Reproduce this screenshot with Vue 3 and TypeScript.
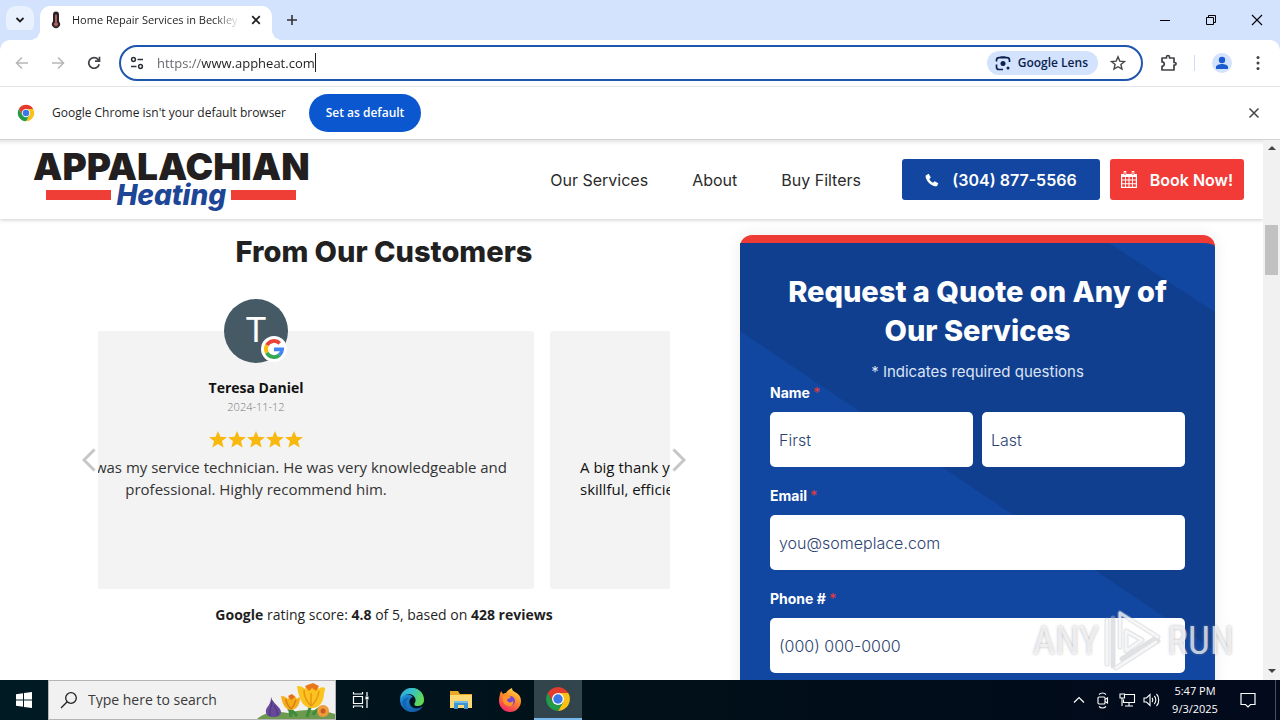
<script setup lang="ts">
import { ref } from 'vue'

interface Field {
  id: string
  label: string
  inputs: { id: string; placeholder: string; type: string }[]
}

const address = ref('https://www.appheat.com')
const navLinks: string[] = ['Our Services', 'About', 'Buy Filters']
const fields: Field[] = [
  {
    id: 'name',
    label: 'Name',
    inputs: [
      { id: 'first-name', placeholder: 'First', type: 'text' },
      { id: 'last-name', placeholder: 'Last', type: 'text' },
    ],
  },
  { id: 'email', label: 'Email', inputs: [{ id: 'email-input', placeholder: 'you@someplace.com', type: 'email' }] },
  { id: 'phone', label: 'Phone #', inputs: [{ id: 'phone-input', placeholder: '(000) 000-0000', type: 'tel' }] },
]
</script>

<template>
  <div class="screen">
    <header class="tabstrip">
      <button class="tab-search" aria-label="Search tabs">
        <svg width="10" height="10" viewBox="0 0 10 10"><path d="M1.500 3l3.500 3.500L8.500 3" fill="none" stroke="#1f1f1f" stroke-width="1.800" /></svg>
      </button>
      <div class="tab">
        <svg class="favicon" width="10" height="18" viewBox="0 0 10 18">
          <path d="M2 3.500a3 3 0 016 0v7a4 4 0 11-6 0z" fill="#2b2226" />
          <path d="M4 4.500a1 1 0 012 0v7a2 2 0 11-2 0z" fill="#a8605f" />
        </svg>
        <span class="tab-title">Home Repair Services in Beckley</span>
        <button class="tab-close" aria-label="Close tab">
          <svg width="10" height="10" viewBox="0 0 10 10"><path d="M1.200 1.200l7.600 7.600M8.800 1.200L1.200 8.800" stroke="#1f1f1f" stroke-width="1.700" /></svg>
        </button>
      </div>
      <button class="new-tab" aria-label="New tab">
        <svg width="12" height="12" viewBox="0 0 12 12"><path d="M6 1v10M1 6h10" stroke="#333" stroke-width="1.600" /></svg>
      </button>
      <div class="window-buttons">
        <button aria-label="Minimize"><svg width="12" height="12" viewBox="0 0 12 12"><path d="M1 6.500h10" stroke="#000" /></svg></button>
        <button aria-label="Restore">
          <svg width="12" height="12" viewBox="0 0 12 12" fill="none" stroke="#000"><path d="M1.500 3.500h7v7h-7zM3.500 3.500v-2h7v7h-2" /></svg>
        </button>
        <button aria-label="Close"><svg width="12" height="12" viewBox="0 0 12 12"><path d="M1 1l10 10M11 1L1 11" stroke="#000" stroke-width="1.100" /></svg></button>
      </div>
    </header>

    <div class="toolbar">
      <button class="nav-button" aria-label="Back">
        <svg width="16" height="16" viewBox="0 0 16 16" fill="none" stroke="#b4b6b9" stroke-width="1.500"><path d="M14 8H2.500M8 2.500L2.500 8 8 13.500" /></svg>
      </button>
      <button class="nav-button" aria-label="Forward">
        <svg width="16" height="16" viewBox="0 0 16 16" fill="none" stroke="#b4b6b9" stroke-width="1.500"><path d="M2 8h11.500M8 2.500L13.500 8 8 13.500" /></svg>
      </button>
      <button class="nav-button" aria-label="Reload">
        <svg width="16" height="16" viewBox="0 0 16 16" fill="none" stroke="#3f4246" stroke-width="1.700"><path d="M13.200 9.200A5.300 5.300 0 1112 4.400l1 1" /><path d="M13.500 1.700v4.500H9" /></svg>
      </button>
      <div class="omnibox">
        <svg width="14" height="14" viewBox="0 0 14 14" fill="none" stroke="#2f3337" stroke-width="1.500"><circle cx="3.500" cy="3.500" r="1.900" /><path d="M7.500 3.500H13M1 10.500h5.500" /><circle cx="10.500" cy="10.500" r="1.900" /></svg>
        <div class="address">
          <input v-model="address" aria-label="Address" spellcheck="false" />
          <i class="caret"></i>
        </div>
        <button class="lens">
          <svg width="16" height="16" viewBox="0 0 16 16" fill="none" stroke="#0b2250" stroke-width="1.700"><path d="M1.500 6.500V5A2.500 2.500 0 014 2.700h8A2.500 2.500 0 0114.500 5v2M1.500 9.500V12A2.500 2.500 0 004 14.500h4M5.500 2.200h5" /><circle cx="8" cy="8.500" r="2.500" fill="#0b2250" stroke="none" /><circle cx="13" cy="13" r="1.500" fill="#0b2250" stroke="none" /></svg>
          Google Lens
        </button>
        <button class="nav-button" aria-label="Bookmark this page">
          <svg width="16" height="16" viewBox="0 0 16 16" fill="none" stroke="#44474a" stroke-width="1.400"><path d="M8 1.800l1.800 4.300 4.700.4-3.600 3 1.100 4.600L8 11.700 4 14.100l1.100-4.600-3.600-3 4.700-.4z" /></svg>
        </button>
      </div>
      <button class="nav-button extensions" aria-label="Extensions">
        <svg width="18" height="18" viewBox="0 0 18 18" fill="none" stroke="#3f4246" stroke-width="1.700"><path d="M2 4h4.500V3a1.500 1.500 0 013 0v1H14v4.500h.8a1.300 1.300 0 010 2.600H14V16H2v-3.700c3 0 3-4.400 0-4.400z" stroke-linejoin="round" /></svg>
      </button>
      <i class="divider"></i>
      <button class="profile" aria-label="Profile">
        <svg width="14" height="14" viewBox="0 0 14 14" fill="#1b5bd0"><circle cx="7" cy="4" r="3.200" /><path d="M1 13v-2c0-2 3.500-3 6-3s6 1 6 3v2z" /></svg>
      </button>
      <button class="nav-button menu" aria-label="Menu">
        <svg width="4" height="16" viewBox="0 0 4 16" fill="#3f4246"><circle cx="2" cy="2.500" r="1.500" /><circle cx="2" cy="8" r="1.500" /><circle cx="2" cy="13.500" r="1.500" /></svg>
      </button>
    </div>

    <div class="infobar">
      <svg class="chrome-logo" viewBox="0 0 48 48"><path d="M24 13h19.050A22 22 0 004.950 13l9.550 16.500z" fill="#e33b2e" /><path d="M33.500 29.500L24 46a22 22 0 0019.050-33H24z" fill="#fbc116" /><path d="M14.500 29.500L4.950 13A22 22 0 0024 46l9.500-16.500z" fill="#229a48" /><circle cx="24" cy="24" r="11" fill="#fff" /><circle cx="24" cy="24" r="8.700" fill="#3b78e8" /></svg>
      <span class="message">Google Chrome isn't your default browser</span>
      <button class="set-default">Set as default</button>
      <button class="dismiss" aria-label="Dismiss">
        <svg width="12" height="12" viewBox="0 0 12 12"><path d="M1.500 1.500l9 9M10.500 1.500l-9 9" stroke="#444" stroke-width="1.500" /></svg>
      </button>
    </div>

    <div class="viewport">
      <div class="page">
        <div class="site-header">
          <a class="logo" href="#">
            <span class="logo-main">APPALACHIAN</span>
            <span class="logo-sub"><i></i><b>Heating</b><i></i></span>
          </a>
          <nav>
            <a v-for="link in navLinks" :key="link" href="#">{{ link }}</a>
          </nav>
          <div class="cta">
            <a class="call" href="tel:3048775566">
              <svg width="14" height="14" viewBox="0 0 14 14"><path d="M1 2.200L3.700.7 5.800 4.500 4.300 6c.8 1.700 2 2.900 3.700 3.700l1.600-1.500 3.700 2.100-1.200 2.600c-.7.500-2 .6-3.200.2C5 11.700 2.300 9 .9 5.100.5 4 .6 2.900 1 2.200z" fill="#fff" /></svg>
              (304) 877-5566
            </a>
            <a class="book" href="#">
              <svg width="16" height="17" viewBox="0 0 16 17"><path d="M0 3h16v14H0z" fill="#fff" /><path d="M4 0v4.500M12 0v4.500" stroke="#fff" stroke-width="2.600" /><path d="M4 1v3M12 1v3" stroke="#f23a37" /><g fill="#f23a37"><path d="M1.200 6h2.800v2.600H1.200zM4.900 6h2.600v2.600H4.900zM8.500 6h2.600v2.600H8.500zM12 6h2.800v2.600H12zM1.200 9.600h2.800v2.600H1.200zM4.900 9.600h2.600v2.600H4.900zM8.500 9.600h2.600v2.600H8.500zM12 9.600h2.800v2.600H12zM1.200 13.200h2.800v2.600H1.200zM4.900 13.200h2.600v2.600H4.900zM8.500 13.200h2.600v2.600H8.500zM12 13.200h2.800v2.600H12z" /></g></svg>
              Book Now!
            </a>
          </div>
        </div>

        <main class="content">
          <section class="reviews">
            <h2>From Our Customers</h2>
            <div class="slider">
              <button class="arrow prev" aria-label="Previous review">
                <svg width="14" height="24" viewBox="0 0 14 24"><path d="M12.500 1.500L2 12l10.500 10.500" fill="none" stroke="#c6c6c6" stroke-width="3" /></svg>
              </button>
              <div class="window">
                <div class="track">
                  <article class="card">
                    <div class="avatar">T
                      <svg class="google-badge" viewBox="0 0 26 26"><circle cx="13" cy="13" r="13" fill="#fff" /><g fill="none" stroke-width="3.800"><path d="M5.900 9.200A8.100 8.100 0 0118.700 7.300" stroke="#ea4335" /><path d="M5.900 16.800a8.100 8.100 0 010-7.600" stroke="#fbbc05" /><path d="M18.400 19A8.100 8.100 0 015.900 16.800" stroke="#34a853" /><path d="M13 13.300h8.100A8.100 8.100 0 0118.400 19" stroke="#4285f4" /></g></svg>
                    </div>
                    <strong class="reviewer">Teresa Daniel</strong>
                    <time datetime="2024-11-12">2024-11-12</time>
                    <div class="stars" role="img" aria-label="5 stars">
                      <svg v-for="n in 5" :key="n" width="18" height="17" viewBox="0 0 18 17"><path d="M9 0l2.400 5.800 6.600.4-5 3.900 1.600 6.400L9 13l-5.600 3.500L5 10.100 0 6.200l6.600-.4z" fill="#f9b80e" /></svg>
                    </div>
                    <p class="quote"><span class="cut">was my service technician. He was very knowledgeable and</span><span>professional. Highly recommend him.</span></p>
                  </article>
                  <article class="card next">
                    <p class="quote"><span>A big thank you</span><span>skillful, efficient</span></p>
                  </article>
                </div>
              </div>
              <button class="arrow forward" aria-label="Next review">
                <svg width="14" height="24" viewBox="0 0 14 24"><path d="M1.500 1.500L12 12 1.500 22.500" fill="none" stroke="#c6c6c6" stroke-width="3" /></svg>
              </button>
            </div>
            <p class="score"><b>Google</b> rating score: <b>4.8</b> of 5, based on <b>428 reviews</b></p>
          </section>

          <form class="quote-form" @submit.prevent>
            <h2>Request a Quote on Any of Our Services</h2>
            <p class="note">* Indicates required questions</p>
            <div v-for="field in fields" :key="field.id" class="field">
              <label :for="field.inputs[0].id">{{ field.label }} <em>*</em></label>
              <div class="inputs">
                <input v-for="input in field.inputs" :id="input.id" :key="input.id" :type="input.type" :placeholder="input.placeholder" :aria-label="input.placeholder" />
              </div>
            </div>
          </form>
        </main>
      </div>

      <div class="scrollbar">
        <svg width="8" height="4" viewBox="0 0 8 4"><path d="M0 4l4-4 4 4z" fill="#444" /></svg>
        <i class="thumb"></i>
        <svg class="down" width="8" height="4" viewBox="0 0 8 4"><path d="M0 0l4 4 4-4z" fill="#444" /></svg>
      </div>

      <div class="watermark">
        <span>ANY</span>
        <svg width="58" height="62" viewBox="0 0 58 62" fill="none" stroke-linejoin="round" stroke-linecap="round">
          <g stroke="#b9bcc4" stroke-opacity=".45" stroke-width="5"><path d="M16 3l38 24-36 22M16 3v34M3 10v44M9 8v48M12 58l42-27M22 21v20l16-11z" /></g>
          <g stroke="#fff" stroke-opacity=".7" stroke-width="3"><path d="M16 3l38 24M16 3v34M3 10v44M12 58l40-26M22 21v20l16-11z" /></g>
        </svg>
        <span>RUN</span>
      </div>
    </div>

    <footer class="taskbar">
      <button class="start" aria-label="Start">
        <svg width="16" height="16" viewBox="0 0 16 16" fill="#fff"><path d="M0 2.200L7 1.200v6.300H0zM8 1l8-1v7.500H8zM0 8.500h7v6.300l-7-1zM8 8.500h8V16l-8-1.100z" /></svg>
      </button>
      <div class="search">
        <svg width="18" height="18" viewBox="0 0 18 18" fill="none" stroke="#222" stroke-width="1.300"><circle cx="11" cy="7" r="5.300" /><path d="M7.200 10.800L1 17" /></svg>
        <input aria-label="Type here to search" placeholder="Type here to search" />
        <svg class="flowers" width="78" height="38" viewBox="0 0 78 38">
          <path d="M0 38c8-7 20-8 31-6 14-4 32-4 47 1v5z" fill="#6c9a4f" />
          <path d="M34 36c0-6-2-9-4-13M50 36c2-7 3-10 5-14M40 35c-3-4-6-6-9-7M56 34c2-4 5-6 8-7" stroke="#3f8b3c" stroke-width="3" fill="none" />
          <path d="M14 16c2 7 10 10 10 15 0 4-4 5-8 5s-8-2-7-7c1-4 5-5 5-13z" fill="#67499b" /><path d="M15 20c0 6-3 8-2 15M17 24c2 4 4 6 3 11" stroke="#47307a" fill="none" />
          <path d="M24 15c3 0 5 1 7 3 1-3 3-4 5-4 2 1 3 2 4 4 1-1 2-2 3-1 0 7-4 12-9 12-6 0-9-7-10-14z" fill="#f5ad18" /><path d="M29 18c0 4 2 7 5 10 3-3 4-6 5-9" stroke="#d9801a" fill="none" stroke-width="1.500" /><path d="M31 15l3 4 4-3-3-3z" fill="#e66d1a" />
          <path d="M40 5c4 0 6 1 8 3 1-4 4-5 7-5 4 0 6 2 7 5 2-2 4-2 6-1 0 4-1 4-1 5 0 8-4 15-12 15-10 0-12-10-14-16z" fill="#fbc31d" /><path d="M47 9c0 7 3 12 7 16 5-4 7-9 8-15M54 12v12" stroke="#e9941a" fill="none" stroke-width="1.500" /><path d="M48 5l4 5 3-3 4 3 3-5-6-3z" fill="#ea761c" />
          <circle cx="66" cy="30" r="6" fill="#ee9b3a" /><circle cx="66" cy="30" r="2.500" fill="#c65a24" />
        </svg>
      </div>
      <button class="app task-view" aria-label="Task View">
        <svg width="18" height="18" viewBox="0 0 18 18" fill="none" stroke="#fff" stroke-width="1.200"><path d="M1.500 5.500h9v7h-9zM1.500 1v2h9V1M1.500 17v-2h9v2M15 1v4M15 9v8" /><path d="M13.500 5.500h3v3h-3z" fill="#fff" stroke="none" /></svg>
      </button>
      <button class="app" aria-label="Microsoft Edge">
        <svg width="24" height="24" viewBox="0 0 24 24"><defs><linearGradient id="edgeTop" x1="0" y1="0" x2="1" y2=".4"><stop offset="0" stop-color="#2ea5dd" /><stop offset=".5" stop-color="#35c1c9" /><stop offset="1" stop-color="#62d953" /></linearGradient><linearGradient id="edgeBase" x1="0" y1="0" x2="1" y2="1"><stop offset="0" stop-color="#1f97df" /><stop offset="1" stop-color="#114e9c" /></linearGradient></defs><path d="M12 24A12 12 0 010 11.500C2 6 9 4.500 13 9c-5 1-5 9 1 11 4 1 7-.5 9-2A12 12 0 0112 24z" fill="url(#edgeBase)" /><path d="M0 11.500A12 12 0 0124 12c0 5-4 6-7 6-2 0-3-1-2.500-2.500C18 10 12 4.500 6 6.500 3 7.500 1 9.500 0 11.500z" fill="url(#edgeTop)" /><path d="M9 9.500c-5 5-3 12 3 14.500C3 23 0 15 4 11c1.500-1.400 3.500-1.800 5-1.500z" fill="#1565b6" /></svg>
      </button>
      <button class="app" aria-label="File Explorer">
        <svg width="22" height="20" viewBox="0 0 22 20"><path d="M0 1h8l2 3h12v14H0z" fill="#e9a825" /><path d="M0 5h22v13H0z" fill="#fcd974" /><path d="M4 11h14v8h-4v-4H8v4H4z" fill="#3c94d3" /><path d="M4 11h14v2H4z" fill="#74bde9" /></svg>
      </button>
      <button class="app" aria-label="Firefox">
        <svg width="24" height="24" viewBox="0 0 24 24"><defs><linearGradient id="fox" x1=".8" y1="0" x2=".3" y2="1"><stop offset="0" stop-color="#ffe14a" /><stop offset=".45" stop-color="#ff8a26" /><stop offset="1" stop-color="#f0286a" /></linearGradient></defs><path d="M3 3l2 3c1-1 2-1 3-1 2-3 4-4 6-5 0 2 1 3 3 4 4 2 6 5 6 9a11 11 0 01-22 0c0-4 1-7 2-10z" fill="url(#fox)" /><circle cx="12" cy="13" r="5" fill="#7446d8" /><path d="M5 8c4-1 6 0 8 1-1 2-4 1-4 3 1 3 4 3 6 1 1 4-2 6-5 5-4-1-6-5-5-10z" fill="#ff9527" /></svg>
      </button>
      <button class="app active" aria-label="Google Chrome">
        <svg width="26" height="26" viewBox="0 0 48 48"><path d="M24 13h19.050A22 22 0 004.950 13l9.550 16.500z" fill="#e33b2e" /><path d="M33.500 29.500L24 46a22 22 0 0019.050-33H24z" fill="#fbc116" /><path d="M14.500 29.500L4.950 13A22 22 0 0024 46l9.500-16.500z" fill="#229a48" /><circle cx="24" cy="24" r="11" fill="#fff" /><circle cx="24" cy="24" r="8.700" fill="#3b78e8" /></svg>
      </button>
      <div class="tray">
        <button aria-label="Show hidden icons"><svg width="12" height="8" viewBox="0 0 12 8"><path d="M1 6.500l5-5 5 5" fill="none" stroke="#fff" stroke-width="1.200" /></svg></button>
        <button aria-label="Meet now"><svg width="12" height="18" viewBox="0 0 12 18" fill="none" stroke="#fff" stroke-width="1.100"><rect x="1" y="6" width="7" height="7" rx="1" /><path d="M8 8.500L10.500 7v5L8 10.500M2 3.500c2-2 5-2 7 0M2 15.500c2 2 5 2 7 0" /></svg></button>
        <button aria-label="Network"><svg width="17" height="14" viewBox="0 0 17 14" fill="none" stroke="#fff" stroke-width="1.100"><path d="M5.500 1.500h10v8h-11v-3M10 9.500v3M6 13h8M1 1h4.500v4H1zM3 5v8" /></svg></button>
        <button aria-label="Volume"><svg width="17" height="14" viewBox="0 0 17 14" fill="none" stroke="#fff" stroke-width="1.100"><path d="M1 5h2.500L7 1.500v11L3.500 9H1zM9 5c1 1 1 3 0 4M11.300 3c2 2 2 6 0 8M13.500 1c3 3 3 9 0 12" /></svg></button>
      </div>
      <div class="clock"><span>5:47 PM</span><span>9/3/2025</span></div>
      <button class="notifications" aria-label="Notifications">
        <svg width="16" height="16" viewBox="0 0 16 16" fill="none" stroke="#fff" stroke-width="1.200"><path d="M1 1.500h14v11h-4.500L8 15l-2.500-2.500H1z" /></svg>
      </button>
    </footer>
  </div>
</template>

<style>
body {
  margin: 0;
}
</style>

<style scoped>
* {
  box-sizing: border-box;
}
button {
  border: 0;
  padding: 0;
  background: none;
  font: inherit;
  color: inherit;
  display: flex;
  align-items: center;
  justify-content: center;
}
input {
  font: inherit;
  border: 0;
  padding: 0;
  outline: 0;
}
a {
  color: inherit;
  text-decoration: none;
}
h2,
p {
  margin: 0;
}
.screen {
  height: 100vh;
  display: flex;
  flex-direction: column;
  overflow: hidden;
  background: #fff;
  color: #1f1f1f;
  font: 12px/16px 'Open Sans', 'Noto Sans', sans-serif;
}
.tabstrip {
  height: 40px;
  flex: none;
  display: flex;
  align-items: flex-end;
  background: #d3e3fd;
  padding-left: 6px;
}
.tab-search {
  width: 28px;
  height: 28px;
  margin: 0 6px 6px 0;
  border-radius: 10px;
  background: #eaf1fe;
}
.tab {
  position: relative;
  width: 232px;
  height: 34px;
  display: flex;
  align-items: center;
  padding: 0 11px 6px 11px;
  border-radius: 10px 10px 0 0;
  background: #fff;
}
.tab::before,
.tab::after {
  content: '';
  position: absolute;
  bottom: 0;
  width: 10px;
  height: 10px;
}
.tab::before {
  right: 100%;
  background: radial-gradient(circle at 0 0, transparent 10px, #fff 10px);
}
.tab::after {
  left: 100%;
  background: radial-gradient(circle at 100% 0, transparent 10px, #fff 10px);
}
.tab-title {
  flex: 1;
  margin: 0 10px 0 11px;
  overflow: hidden;
  white-space: nowrap;
  font-size: 11px;
  mask-image: linear-gradient(90deg, #000 142px, transparent 168px);
}
.new-tab {
  width: 28px;
  height: 28px;
  margin: 0 0 6px 6px;
}
.window-buttons {
  display: flex;
  align-self: stretch;
  margin-left: auto;
}
.window-buttons button {
  width: 46px;
}
.toolbar {
  height: 47px;
  flex: none;
  display: flex;
  align-items: center;
  padding: 0 8px 1px 8px;
  border-bottom: 1px solid #e3e5e8;
  border-radius: 10px 10px 0 0;
  box-shadow: 0 -10px 0 #d3e3fd;
  background: #fff;
}
.nav-button {
  width: 28px;
  height: 28px;
  margin-right: 8px;
}
.omnibox {
  flex: 1;
  height: 36px;
  display: flex;
  align-items: center;
  margin-left: 3px;
  padding-left: 9px;
  border: 2px solid #1f56ad;
  border-radius: 18px;
}
.omnibox .nav-button {
  margin: 0 9px 0 6px;
}
.address {
  flex: 1;
  display: flex;
  align-items: center;
  margin-left: 13px;
  font-size: 13px;
}
.address input {
  field-sizing: content;
  color: transparent;
  background: linear-gradient(90deg, #5f6368 44px, #1f1f1f 44px);
  background-clip: text;
}
.caret {
  width: 1px;
  height: 19px;
  background: #1f1f1f;
}
.lens {
  height: 24px;
  gap: 7px;
  padding: 0 10px 0 8px;
  border-radius: 12px;
  background: #d3e3fd;
  color: #0b2250;
  font-weight: 600;
}
.extensions {
  margin: 0 11px 0 12px;
}
.divider {
  width: 1px;
  height: 16px;
  margin-right: 17px;
  background: #cfdcf3;
}
.profile {
  width: 20px;
  height: 20px;
  border-radius: 50%;
  background: #d3e3fd;
}
.menu {
  margin: 0 0 0 12px;
}
.infobar {
  height: 53px;
  flex: none;
  display: flex;
  align-items: center;
  padding: 0 20px 0 17px;
  border-bottom: 1px solid #d0d2d4;
}
.chrome-logo {
  width: 18px;
  height: 18px;
  margin-right: 17px;
}
.set-default {
  width: 112px;
  height: 38px;
  margin-left: 23px;
  border-radius: 19px;
  background: #0b57d0;
  color: #fff;
  font-weight: 600;
}
.dismiss {
  margin-left: auto;
}
.viewport {
  position: relative;
  flex: 1;
  min-height: 0;
  display: flex;
  overflow: hidden;
}
.page {
  flex: 1;
  min-width: 0;
  overflow: hidden;
  font-family: Inter, 'Open Sans', sans-serif;
}
.site-header {
  height: 79px;
  display: flex;
  align-items: center;
  padding: 0 19px 0 33px;
  background: linear-gradient(#e6e6e6, #fff 5px);
  box-shadow: 0 1px 4px rgba(0, 0, 0, 0.2);
}
.logo {
  display: flex;
  flex-direction: column;
  align-items: center;
}
.logo-main {
  color: #231f20;
  font: 900 37px/30px Inter, sans-serif;
}
.logo-sub {
  display: flex;
  align-items: center;
  gap: 5px;
}
.logo-sub i {
  width: 65px;
  height: 10px;
  background: #ef3e36;
}
.logo-sub b {
  color: #1d4696;
  font: italic 800 28px/26px Inter, sans-serif;
}
nav {
  display: flex;
  gap: 44px;
  margin-left: auto;
  color: #2b2b2b;
  font-size: 16px;
}
.cta {
  display: flex;
  gap: 10px;
  margin-left: 41px;
  color: #fff;
  font-size: 16px;
  font-weight: 600;
}
.cta a {
  height: 41px;
  display: flex;
  align-items: center;
  justify-content: center;
  gap: 13px;
  border-radius: 3px;
}
.cta .call {
  width: 198px;
  background: #1346a0;
}
.cta .book {
  width: 134px;
  background: #f23a37;
}
.content {
  display: grid;
  grid-template-columns: minmax(0, 1fr) 475px;
  gap: 20px;
  padding: 16px 48px 0;
}
.reviews {
  text-align: center;
  font-family: 'Open Sans', sans-serif;
}
.reviews h2 {
  color: #212121;
  font: 800 29px/34px Inter, sans-serif;
}
.slider {
  position: relative;
  margin: 30px 50px 0;
}
.window {
  overflow: hidden;
  padding-top: 32px;
}
.track {
  display: flex;
  gap: 16px;
  margin-left: -120px;
}
.card {
  flex: none;
  width: 556px;
  height: 258px;
  display: flex;
  flex-direction: column;
  align-items: center;
  border-radius: 3px;
  background: #f3f3f3;
}
.avatar {
  position: relative;
  width: 64px;
  height: 64px;
  margin-top: -32px;
  border-radius: 50%;
  background: #455a64;
  color: #fff;
  font: 35px/64px Roboto, sans-serif;
}
.google-badge {
  position: absolute;
  right: 1px;
  bottom: 1px;
  width: 26px;
  height: 26px;
}
.reviewer {
  margin-top: 15px;
  color: #111;
  font-size: 14px;
  font-weight: 700;
  line-height: 20px;
}
time {
  color: #777;
  font-size: 11px;
  font-weight: 300;
  line-height: 18px;
}
.stars {
  display: flex;
  gap: 1px;
  margin: 15px 0 8px;
}
.quote {
  align-self: stretch;
  color: #333;
  font-size: 15px;
  line-height: 22px;
  white-space: nowrap;
}
.quote span {
  display: block;
}
.quote .cut {
  padding-right: 27px;
  text-align: right;
}
.next .quote {
  margin-top: 125px;
  padding-left: 30px;
  color: #111;
  text-align: left;
}
.arrow {
  position: absolute;
  top: 149px;
  z-index: 1;
}
.prev {
  right: calc(100% + 2px);
}
.forward {
  left: calc(100% + 2px);
}
.score {
  margin-top: 16px;
  font-size: 14px;
  line-height: 20px;
}
.quote-form {
  position: relative;
  isolation: isolate;
  min-height: 600px;
  padding: 29px 30px 30px;
  border-top: 8px solid #ef3b36;
  border-radius: 12px 12px 0 0;
  background: #1147a1;
  color: #fff;
  box-shadow: 0 0 16px rgba(0, 0, 0, 0.08);
}
.quote-form::before {
  content: '';
  position: absolute;
  inset: 0;
  z-index: -1;
  background: #113f90;
  clip-path: polygon(0 0, 369px 0, 100% 69px, 100% 408px, 0 88px);
}
.quote-form h2 {
  font-size: 29px;
  font-weight: 800;
  line-height: 39px;
  text-align: center;
}
.note {
  margin-top: 10px;
  color: #dbe4f5;
  font-size: 15px;
  line-height: 23px;
  text-align: center;
}
.field {
  margin-bottom: 19px;
}
.field label {
  display: block;
  margin-bottom: 9px;
  font-size: 14px;
  font-weight: 700;
  line-height: 20px;
}
.field em {
  color: #ef3b36;
  font-style: normal;
  font-weight: 400;
}
.inputs {
  display: flex;
  gap: 9px;
}
.inputs input {
  flex: 1;
  min-width: 0;
  height: 55px;
  padding: 0 9px;
  border-radius: 5px;
  background: #fff;
  font-size: 16px;
}
.inputs input::placeholder {
  color: #2d4373;
  font-weight: 300;
  opacity: 1;
}
.scrollbar {
  width: 17px;
  flex: none;
  display: flex;
  flex-direction: column;
  align-items: center;
  padding: 6px 0 7px;
  background: #f1f1f1;
}
.thumb {
  width: 13px;
  height: 50px;
  margin-top: 75px;
  background: #c1c1c1;
}
.down {
  margin-top: auto;
}
.watermark {
  position: absolute;
  right: 46px;
  bottom: 8px;
  z-index: 2;
  display: flex;
  align-items: center;
  gap: 5px;
  color: rgba(255, 255, 255, 0.7);
  font: 39px/62px 'Liberation Sans Narrow', 'Roboto Condensed', sans-serif;
  text-shadow: 0 0 3px rgba(130, 130, 140, 0.6);
}
.taskbar {
  height: 40px;
  flex: none;
  display: flex;
  background: linear-gradient(90deg, #001a23, #011019 50%, #020a1c);
  color: #fff;
}
.start {
  width: 48px;
}
.search {
  width: 288px;
  display: flex;
  align-items: center;
  padding-left: 11px;
  border: 1px solid #b5b5b5;
  background: #f1f1f1;
}
.search input {
  flex: 1;
  min-width: 0;
  margin-left: 10px;
  background: none;
  font-size: 14px;
}
.search input::placeholder {
  color: #3a3a3a;
  opacity: 1;
}
.flowers {
  flex: none;
}
.app {
  width: 49px;
}
.app.task-view {
  width: 51px;
  padding-right: 2px;
}
.app.active {
  width: 48px;
  background: #32444c;
  border-bottom: 2px solid #76b9ed;
}
.tray {
  display: flex;
  margin: 0 3px 0 auto;
}
.tray button {
  width: 24px;
}
.clock {
  width: 58px;
  display: flex;
  flex-direction: column;
  justify-content: center;
  line-height: 18px;
  text-align: center;
  font-size: 11px;
}
.notifications {
  width: 52px;
  margin-right: 4px;
  padding-right: 4px;
  border-right: 1px solid #4a5060;
}
</style>
